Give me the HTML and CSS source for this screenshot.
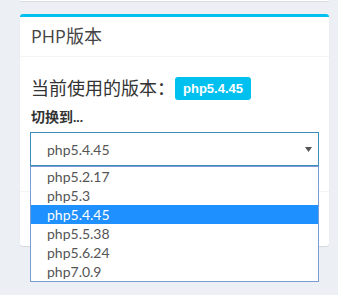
FILE: index.html
```html
<!DOCTYPE html>
<html lang="zh-CN">
<head>
    <meta charset="UTF-8">
    <meta name="viewport" content="width=device-width, initial-scale=1.0">
    <title>PHP版本</title>
    <link rel="stylesheet" href="styles.css">
</head>
<body>
    <div class="content">
        <div class="box box-prev"></div>

        <!-- PHP version box -->
        <div class="box box-info">
            <div class="box-header">
                <h3 class="box-title">PHP版本</h3>
            </div>
            <div class="box-body">
                <h4 class="current">当前使用的版本：<span class="label">php5.4.45</span></h4>
                <label class="switch-label">切换到...</label>
                <div class="select-wrap">
                    <div class="select">
                        <span>php5.4.45</span>
                        <svg class="caret" width="7" height="5" viewBox="0 0 7 5"><path d="M0 0H7L3.5 5Z" fill="#555"/></svg>
                    </div>
                    <ul class="dropdown">
                        <li>php5.2.17</li>
                        <li>php5.3</li>
                        <li class="selected">php5.4.45</li>
                        <li>php5.5.38</li>
                        <li>php5.6.24</li>
                        <li>php7.0.9</li>
                    </ul>
                </div>
            </div>
            <div class="box-footer"></div>
        </div>
    </div>
</body>
</html>
```

FILE: styles.css
```css
html, body {
    min-height: 100%;
}
body {
    font-family: "Lato", "Noto Sans CJK SC", sans-serif;
    background-color: #ecf0f5;
    color: #333;
    margin: 0;
    min-height: 295px;
}
.content {
    padding: 0 9px 0 20px;
}
.box {
    background: #fff;
    border-radius: 3px;
    box-shadow: 0 1px 1px rgba(0, 0, 0, 0.1);
}
.box-prev {
    height: 1px;
    margin-bottom: 13px;
    border-radius: 0 0 3px 3px;
}
.box-info {
    border-top: 3px solid #00c0ef;
}
.box-header {
    padding: 10px 11px;
    height: 19px;
    border-bottom: 1px solid #f4f4f4;
}
.box-title {
    margin: 0;
    font-size: 18px;
    font-weight: normal;
    line-height: 19px;
    color: #444;
    font-family: "Open Sans", "Noto Sans CJK SC", sans-serif;
}
.box-body {
    padding: 10px 10px 25px;
}
.current {
    margin: 10px 0 0 1px;
    font-size: 18px;
    font-weight: normal;
    line-height: 23px;
    height: 23px;
    color: #333;
    display: flex;
    align-items: center;
    font-family: "Open Sans", "Noto Sans CJK SC", sans-serif;
}
.label {
    display: inline-block;
    background-color: #00c0ef;
    color: #fff;
    font-family: "Liberation Sans", Arial, sans-serif;
    font-size: 13px;
    font-weight: bold;
    line-height: 23px;
    height: 23px;
    padding: 0 8px;
    border-radius: 3px;
}
.switch-label {
    display: block;
    margin: 7px 0 5px 1px;
    font-size: 14px;
    font-weight: bold;
    line-height: 20px;
    height: 20px;
}
.select-wrap {
    position: relative;
}
.select {
    height: 32px;
    border: 1px solid #3c8dbc;
    display: flex;
    align-items: center;
    justify-content: space-between;
    padding: 0 6px 0 16px;
    font-size: 14px;
    color: #555;
}
.caret {
    margin-top: 1px;
}
.dropdown {
    position: absolute;
    top: 100%;
    left: 0;
    right: 0;
    margin: 0;
    padding: 0;
    list-style: none;
    background: #fff;
    border: 1px solid #7a9cd3;
}
.dropdown li {
    height: 19px;
    line-height: 19px;
    padding-left: 16px;
    font-size: 14px;
    color: #555;
}
.dropdown li.selected {
    background-color: #1e90ff;
    color: #fff;
}
.box-footer {
    height: 54px;
    border-top: 1px solid #f4f4f4;
}
```
